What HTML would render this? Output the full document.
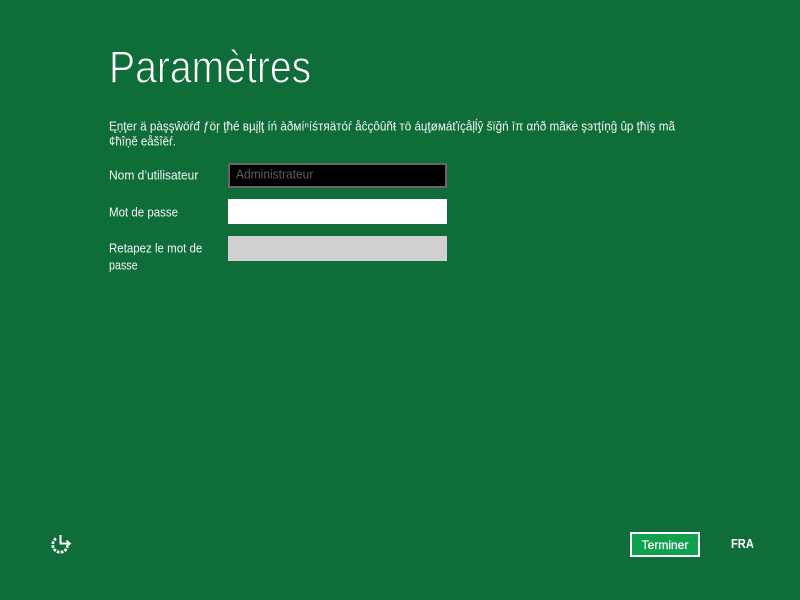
<!DOCTYPE html>
<html lang="fr">
<head>
<meta charset="utf-8">
<title>Paramètres</title>
<style>
html,body{margin:0;padding:0;width:800px;height:600px;overflow:hidden;background:#0f6d3a;}
body{position:relative;font-family:"Liberation Sans","DejaVu Sans",sans-serif;color:#fff;}
svg{position:absolute;left:0;top:0;}
svg text{font-family:"Liberation Sans","DejaVu Sans",sans-serif;}
.box{position:absolute;left:228px;width:219px;box-sizing:border-box;}
</style>
</head>
<body>
<div class="box" style="top:163px;height:25px;background:#000;border:2px solid #666;"></div>
<div class="box" style="top:199px;height:25px;background:#fff;"></div>
<div class="box" style="top:236px;height:25px;background:#d0d0d0;"></div>
<div style="position:absolute;left:630px;top:532px;width:70px;height:25px;box-sizing:border-box;background:#11a050;border:2px solid #fff;"></div>

<svg width="800" height="600" viewBox="0 0 800 600">
  <text transform="translate(109,82.5) scale(0.87,1)" font-size="45" fill="#fff" stroke="#0f6d3a" stroke-width="1">Paramètres</text>

  <text x="109" y="130.5" font-size="12.5" fill="#f2f7f4" textLength="566" lengthAdjust="spacingAndGlyphs">Ęņţer ä pàşşŵöŕđ ƒöŗ ţħé вµįļţ íń àðмíⁿíśтяäтóŕ åĉçôûñŧ тō áųţøмáťïçåļĺŷ šïğń īπ αńð mãκė şэτţíņĝ ûp ţħïş mã</text>
  <text x="109" y="145.5" font-size="12.5" fill="#f2f7f4" textLength="67" lengthAdjust="spacingAndGlyphs">¢ħîņě eåšîēŕ.</text>

  <text transform="translate(109,179.5) scale(0.96,1)" font-size="12.5" fill="#f2f7f4">Nom d’utilisateur</text>
  <text transform="translate(109,216.5) scale(0.92,1)" font-size="12.5" fill="#f2f7f4">Mot de passe</text>
  <text transform="translate(109,252.5) scale(0.92,1)" font-size="12.5" fill="#f2f7f4">Retapez le mot de</text>
  <text transform="translate(109,269.5) scale(0.86,1)" font-size="12.5" fill="#f2f7f4">passe</text>

  <text transform="translate(236,178.5) scale(0.96,1)" font-size="12.5" fill="#5f5a68">Administrateur</text>

  <path d="M60.5 535V543.5H69" fill="none" stroke="#fff" stroke-width="2"/>
  <path d="M66.5 540.5L70 543.5L66.5 546.5" fill="none" stroke="#fff" stroke-width="1.8"/>
  <path d="M56 538.5A7.5 7.5 0 1 0 67.5 546.5" fill="none" stroke="#fff" stroke-width="2.8" stroke-dasharray="2.6 1.3"/>

  <text x="665" y="549" font-size="12" fill="#fff" stroke="#fff" stroke-width="0.25" text-anchor="middle">Terminer</text>
  <text transform="translate(731,548) scale(0.89,1)" font-size="12.5" font-weight="bold" fill="#fff">FRA</text>
</svg>
</body>
</html>
